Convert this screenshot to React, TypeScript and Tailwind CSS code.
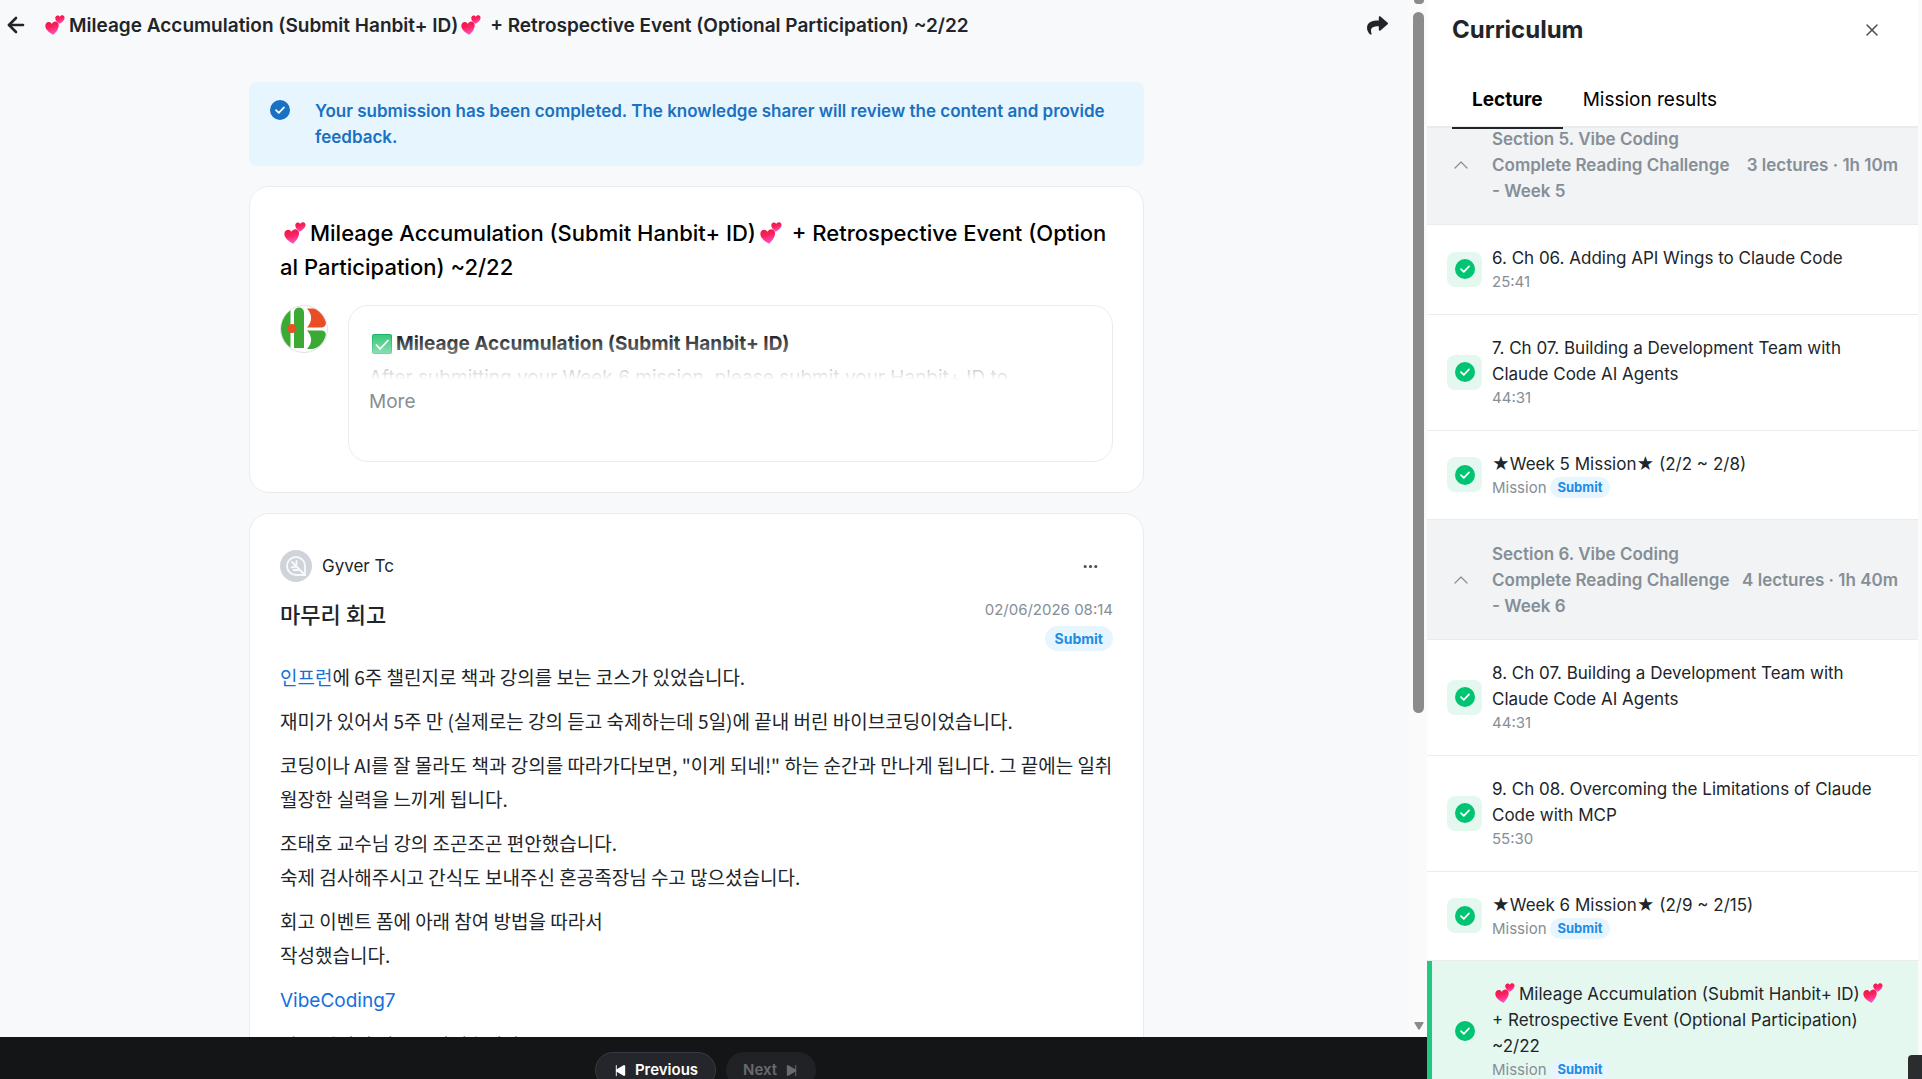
import React, { useState } from "react";
import { ArrowLeft, ChevronUp, X } from "lucide-react";
import { FaShare } from "react-icons/fa";
import { IoPlaySkipBack, IoPlaySkipForward } from "react-icons/io5";
import { BsThreeDots } from "react-icons/bs";

type Lecture = {
  title: React.ReactNode;
  time?: string;
  active?: boolean;
};

type Section = {
  title: string;
  info: string;
  lectures: Lecture[];
};

const Hearts: React.FC<{ className?: string }> = ({ className }) => (
  <svg
    viewBox="0 0 24 24"
    role="img"
    aria-label="two hearts"
    className={`inline-block mr-1 align-[-3px] ${className ?? "ml-[3px] size-5"}`}
  >
    <defs>
      <linearGradient id="heart" x1="0" y1="0" x2="0.3" y2="1">
        <stop offset="0" stopColor="#e8174b" />
        <stop offset="0.5" stopColor="#fb2158" />
        <stop offset="1" stopColor="#fb4fc0" />
      </linearGradient>
    </defs>
    <path
      fill="url(#heart)"
      d="M10 23.6C5 21 .6 17.500.4 13.400.3 10.600 2 8.600 4.400 8.500c1.700 0 2.900.8 3.700 2.200.9-1.900 2.500-3 4.500-2.900 2.500.2 4.100 2.200 3.900 4.800C16.200 16.800 13.500 20.500 10 23.600z"
    />
    <path
      fill="url(#heart)"
      d="M17.300 10.600C14.400 8.600 12.200 6.300 12.300 3.600 12.400 1.800 13.600.6 15.100.6c1.200 0 2 .6 2.500 1.600C18.300.9 19.500.1 20.900.3c1.700.2 2.800 1.600 2.600 3.300-.3 2.700-3 5.300-6.200 7z"
    />
  </svg>
);

const CheckCircle: React.FC<{ className: string }> = ({ className }) => (
  <svg viewBox="0 0 20 20" className={`size-5 shrink-0 ${className}`}>
    <circle cx="10" cy="10" r="10" fill="currentColor" />
    <path
      d="M6 10.200l2.800 2.700L14 7.400"
      fill="none"
      stroke="#fff"
      strokeWidth="1.700"
      strokeLinecap="round"
      strokeLinejoin="round"
    />
  </svg>
);

const HanbitLogo: React.FC = () => (
  <svg viewBox="0 0 48 48" className="size-12 shrink-0" role="img" aria-label="Hanbit">
    <defs>
      <clipPath id="round">
        <circle cx="24" cy="24" r="23" />
      </clipPath>
    </defs>
    <circle cx="24" cy="24" r="23.500" fill="#fff" stroke="#dee2e6" />
    <g clipPath="url(#round)">
      <path fill="#3aaa35" d="M0 0h10.500v48H0zM14 7.500a5 5 0 0 1 10 0V43H14zM10 20h5v7h-5z" />
      <path fill="#e94e24" d="M27 3.500h9C41 6 46 14 46 17.500c0 3-2 5-5 5H27c5.500-6 5.500-13 0-19z" />
      <path fill="#3aaa35" d="M27 25.500h14c4 0 5.500 2.500 4.500 6C44 37 39 44 31 44h-4c5.500-6 5.500-12.500 0-18.500z" />
      <circle cx="12" cy="23.500" r="4.500" fill="#e94e24" />
    </g>
  </svg>
);

const UserAvatar: React.FC = () => (
  <svg viewBox="0 0 32 32" className="size-8 shrink-0">
    <circle cx="16" cy="16" r="16" fill="#ced4da" />
    <g fill="none" stroke="#f8f9fa" strokeWidth="1.800" strokeLinecap="round" strokeLinejoin="round">
      <path d="M25 25h-9a9 9 0 1 1 9-9z" />
      <path d="M12 12l13 13M16.500 16.500v-5.500M16.500 16.500l-5 .8M19.500 20h-6" />
    </g>
  </svg>
);

const GreenCheck: React.FC = () => (
  <svg viewBox="0 0 20 20" className="mr-1 ml-[3px] inline-block size-5 align-[-4px]" role="img" aria-label="check">
    <rect width="20" height="20" rx="2" fill="#21b26b" />
    <rect x="1" y="1" width="18" height="18" rx="1" fill="#3cca7e" />
    <path d="M4 10.500l4 4.500 8.500-9" fill="none" stroke="#fff" strokeWidth="1.800" />
  </svg>
);

const sections: Section[] = [
  {
    title: "Section 5. Vibe Coding Complete Reading Challenge - Week 5",
    info: "3 lectures · 1h 10m",
    lectures: [
      { title: "6. Ch 06. Adding API Wings to Claude Code", time: "25:41" },
      {
        title: "7. Ch 07. Building a Development Team with Claude Code AI Agents",
        time: "44:31",
      },
      { title: "★Week 5 Mission★ (2/2 ~ 2/8)" },
    ],
  },
  {
    title: "Section 6. Vibe Coding Complete Reading Challenge - Week 6",
    info: "4 lectures · 1h 40m",
    lectures: [
      {
        title: "8. Ch 07. Building a Development Team with Claude Code AI Agents",
        time: "44:31",
      },
      {
        title: "9. Ch 08. Overcoming the Limitations of Claude Code with MCP",
        time: "55:30",
      },
      { title: "★Week 6 Mission★ (2/9 ~ 2/15)" },
      {
        title: (
          <>
            <Hearts />
            Mileage Accumulation (Submit Hanbit+ ID)
            <Hearts /> + Retrospective Event (Optional Participation) ~2/22
          </>
        ),
        active: true,
      },
    ],
  },
];

const LectureRow: React.FC<{ lecture: Lecture }> = ({ lecture }) => (
  <li
    className={`flex items-center gap-[10px] border-b border-b-[#e9ecef] pt-5 pr-5 pb-[21px] ${
      lecture.active
        ? "border-l-[5px] border-l-[#20c981] bg-[#e5f8f0] pl-[15px]"
        : "pl-5"
    }`}
  >
    <span className="flex size-[35px] shrink-0 items-center justify-center rounded-lg bg-[#e5f8f0]">
      <CheckCircle className="text-[#00c471]" />
    </span>
    <div className="min-w-0">
      <p className="text-[17px] leading-[26px] text-[#212529]">{lecture.title}</p>
      {lecture.time ? (
        <p className="text-[15px] leading-[22px] text-[#868e96]">{lecture.time}</p>
      ) : (
        <p className="flex items-center gap-[3px] text-[15px] leading-[21px] text-[#868e96]">
          Mission
          <span className="rounded-full bg-[#e7f5ff] px-2 text-[13px] font-bold text-[#228be6]">
            Submit
          </span>
        </p>
      )}
    </div>
  </li>
);

const Curriculum: React.FC = () => {
  const [tab, setTab] = useState("Lecture");

  return (
    <aside className="flex w-[495px] shrink-0 flex-col border-r-4 border-[#fafafa] bg-white">
      <div className="flex h-[60px] shrink-0 items-center justify-between pr-9 pl-[25px]">
        <h2 className="text-2xl font-bold text-[#212529]">Curriculum</h2>
        <button aria-label="Close" className="text-[#495057]">
          <X size={20} strokeWidth={1.8} />
        </button>
      </div>
      <div className="z-10 flex h-[68px] shrink-0 items-end border-b-2 border-[#e9ecef] pl-[25px]">
        {["Lecture", "Mission results"].map((name) => (
          <button
            key={name}
            onClick={() => setTab(name)}
            className={`-mb-[3px] h-[46px] border-b-2 px-5 pb-[10px] text-[19px] text-black ${
              tab === name ? "border-[#212529] font-bold" : "border-transparent"
            }`}
          >
            {name}
          </button>
        ))}
      </div>
      <div className="min-h-0 flex-1 overflow-hidden">
        {/* the list is scrolled so that the first section is partly hidden */}
        <div className="-mt-[23px]">
          {sections.map((section) => (
            <section key={section.title}>
              <button className="flex w-full items-center border-b border-[#e9ecef] bg-[#f1f3f5] pt-[21px] pr-5 pb-5 pl-[22px] text-left text-[17px] leading-[26px] font-semibold text-[#868e96]">
                <ChevronUp size={24} strokeWidth={1.2} className="mr-[19px] shrink-0" />
                <span className="w-60">{section.title}</span>
                <span className="ml-auto whitespace-nowrap">{section.info}</span>
              </button>
              <ul>
                {section.lectures.map((lecture, i) => (
                  <LectureRow key={i} lecture={lecture} />
                ))}
              </ul>
            </section>
          ))}
        </div>
      </div>
    </aside>
  );
};

const App: React.FC = () => {
  return (
    <div className="flex h-screen overflow-hidden bg-[#f8f9fa] font-['Inter','Noto_Sans_CJK_KR',sans-serif] text-[#212529]">
      <div className="flex min-w-0 flex-1 flex-col">
        <div className="flex min-h-0 flex-1">
          <main className="min-w-0 flex-1 overflow-hidden">
            <header className="flex h-[50px] items-center pr-5 pl-1">
              <button aria-label="Back">
                <ArrowLeft size={24} strokeWidth={2.6} />
              </button>
              <h1 className="ml-[14px] pt-[2px] text-[19px] font-semibold">
                <Hearts />
                Mileage Accumulation (Submit Hanbit+ ID)
                <Hearts /> + Retrospective Event (Optional Participation) ~2/22
              </h1>
              <button aria-label="Share" className="ml-auto">
                <FaShare size={21} />
              </button>
            </header>

            <div className="pr-[15px]">
              <div className="mx-auto mt-8 flex max-w-[895px] flex-col gap-5">
                <div className="flex gap-[25px] rounded-lg bg-[#e7f5ff] px-[21px] py-4 text-[#1971c2]">
                  <CheckCircle className="mt-[2px]" />
                  <p className="text-[17px] leading-[26px] font-semibold">
                    Your submission has been completed. The knowledge sharer will review the content
                    and provide feedback.
                  </p>
                </div>

                <section className="rounded-[20px] border border-[#e9ecef] bg-white px-[30px] pt-[29px] pb-[30px]">
                  <h2 className="text-[22px] leading-[34px] font-medium break-all text-black">
                    <Hearts className="ml-1 size-[22px]" />
                    Mileage Accumulation (Submit Hanbit+ ID)
                    <Hearts className="ml-1 size-[22px]" /> + Retrospective Event (Optional
                    Participation) ~2/22
                  </h2>
                  <div className="mt-[21px] flex gap-5">
                    <HanbitLogo />
                    <div className="h-[157px] min-w-0 flex-1 rounded-[20px] border border-[#e9ecef] px-5 pt-[21px]">
                      <div className="relative h-[60px] overflow-hidden text-[19px] leading-[34px]">
                        <h3 className="font-bold">
                          <GreenCheck />
                          Mileage Accumulation (Submit Hanbit+ ID)
                        </h3>
                        <p>After submitting your Week 6 mission, please submit your Hanbit+ ID to</p>
                        <div className="absolute inset-0 bg-linear-to-b from-transparent from-15% to-white to-88%" />
                      </div>
                      <button className="text-[19px] leading-[30px] text-[#868e96]">More</button>
                    </div>
                  </div>
                </section>

                <article className="rounded-[20px] border border-[#e9ecef] bg-white px-[30px] pt-9 pb-[30px]">
                  <div className="flex items-center">
                    <UserAvatar />
                    <span className="ml-[10px] pt-[2px] text-[17px]">Gyver Tc</span>
                    <button aria-label="More options" className="mr-[14px] ml-auto text-[#495057]">
                      <BsThreeDots size={17} />
                    </button>
                  </div>
                  <div className="mt-[14px] flex items-start justify-between">
                    <h2 className="font-['Noto_Sans_CJK_KR',sans-serif] text-[22px] leading-[34px] font-medium">
                      마무리 회고
                    </h2>
                    <div className="flex flex-col items-end gap-1 pt-[2px]">
                      <time className="text-[15px] leading-6 text-[#868e96]">02/06/2026 08:14</time>
                      <span className="rounded-full bg-[#e7f5ff] px-[10px] text-sm leading-[25px] font-bold text-[#228be6]">
                        Submit
                      </span>
                    </div>
                  </div>
                  <div className="mt-[9px] space-y-[10px] font-['Noto_Sans_CJK_KR',sans-serif] text-[19px] leading-[34px] break-all">
                    <p>
                      <a href="#" className="text-[#1570dd]">
                        인프런
                      </a>
                      에 6주 챌린지로 책과 강의를 보는 코스가 있었습니다.
                    </p>
                    <p>
                      재미가 있어서 5주 만 (실제로는 강의 듣고 숙제하는데 5일)에 끝내 버린
                      바이브코딩이었습니다.
                    </p>
                    <p>
                      코딩이나 AI를 잘 몰라도 책과 강의를 따라가다보면, "이게 되네!" 하는 순간과
                      만나게 됩니다. 그 끝에는 일취월장한 실력을 느끼게 됩니다.
                    </p>
                    <p>
                      조태호 교수님 강의 조곤조곤 편안했습니다.
                      <br />
                      숙제 검사해주시고 간식도 보내주신 혼공족장님 수고 많으셨습니다.
                    </p>
                    <p>
                      회고 이벤트 폼에 아래 참여 방법을 따라서
                      <br />
                      작성했습니다.
                    </p>
                    <p>
                      <a href="#" className="font-['Inter',sans-serif] text-[#1570dd]">
                        VibeCoding7
                      </a>
                    </p>
                    <p>방 구의실에 리뷰도 남겼습니다.</p>
                  </div>
                </article>
              </div>
            </div>
          </main>

          {/* Scrollbar */}
          <div className="flex w-[19px] shrink-0 flex-col items-center bg-[#fafafa] pl-[2px]">
            <div className="h-1 w-[10px] rounded-b-sm bg-[#8b8b8b]" />
            <div className="mt-2 h-[701px] w-[11px] rounded-full bg-[#8b8b8b]" />
            <svg viewBox="0 0 10 8" className="mt-auto mb-[7px] h-2 w-[10px]">
              <path fill="#8b8b8b" d="M1 0h8q1 0 .5 1L6 7q-1 1.500-2 0L.5 1Q0 0 1 0z" />
            </svg>
          </div>
        </div>

        <footer className="flex h-[42px] shrink-0 items-start justify-center gap-[10px] overflow-hidden bg-[#141517] pt-[15px] pr-4 text-[15px] font-semibold">
          <button className="flex h-9 items-center gap-[7px] rounded-full border border-[#373a40] bg-[#25262b] px-[17px] text-white">
            <IoPlaySkipBack size={15} />
            Previous
          </button>
          <button
            disabled
            className="flex h-9 items-center gap-[7px] rounded-full bg-[#212225] px-[17px] text-[#696a6d]"
          >
            Next
            <IoPlaySkipForward size={15} />
          </button>
        </footer>
      </div>

      <Curriculum />

      <div className="fixed right-0 bottom-0 z-20 h-6 w-[14px] rounded-tl bg-[#2b2c2e]" />
    </div>
  );
};

export default App;
